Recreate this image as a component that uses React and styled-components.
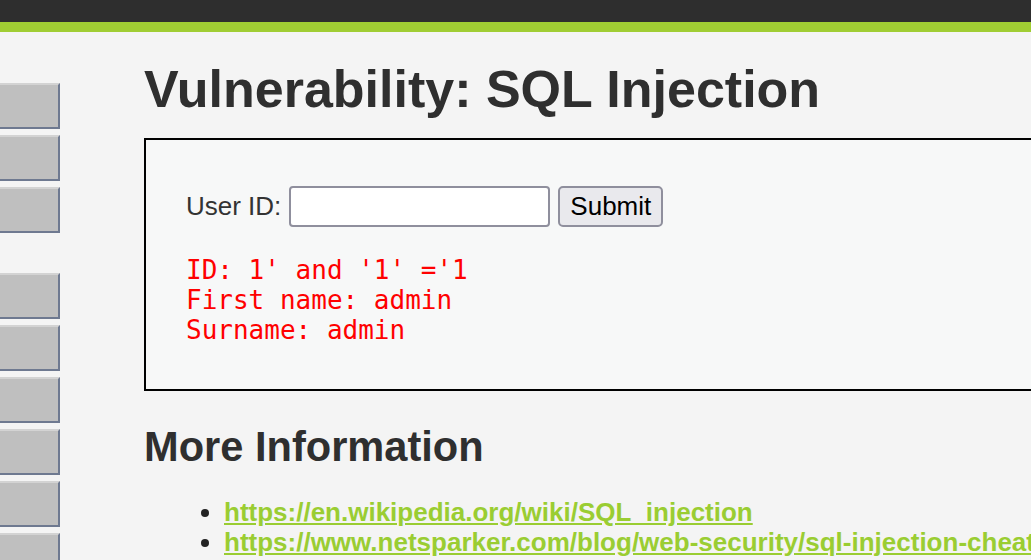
import styled, { createGlobalStyle } from "styled-components"

const Global = createGlobalStyle`
  html, body {
    margin: 0;
    padding: 0;
    background: #f4f4f4;
    overflow: hidden;
  }
  body {
    font-family: 'Liberation Sans', Arial, sans-serif;
    font-size: 26px;
    color: #2f2f2f;
  }
`

const Page = styled.div`
  width: 1031px;
  height: 560px;
  overflow: hidden;
  display: flex;
  flex-direction: column;
`

const Header = styled.div`
  height: 22px;
  background: #2e2e2e;
  border-bottom: 10px solid #a0cd33;
  flex-shrink: 0;
`

const Body = styled.div`
  display: flex;
  align-items: flex-start;
`

const Menu = styled.div`
  width: 60px;
  flex-shrink: 0;
  padding-top: 51px;
`

const MenuGroup = styled.div`
  display: flex;
  flex-direction: column;
  gap: 6px;
  margin-bottom: 40px;
`

const MenuButton = styled.div`
  height: 42px;
  background: #bfbfbf;
  border-top: 2px solid #d3d3d3;
  border-right: 2px solid #6e7990;
  border-bottom: 2px solid #6e7990;
`

const Main = styled.div`
  margin-left: 84px;
  padding-top: 27px;
  width: 1000px;
  flex-shrink: 0;
`

const Title = styled.h1`
  margin: 0 0 19px;
  font-size: 52px;
  line-height: 60px;
  font-weight: 700;
  color: #2f2f2f;
`

const VulnBox = styled.div`
  border: 2px solid #000;
  background: #f7f8f8;
  padding: 46px 40px 44px;
`

const Form = styled.form`
  display: flex;
  align-items: center;
  gap: 8px;
  margin: 0 0 28px;
  color: #333;
`

const Input = styled.input`
  width: 261px;
  height: 41px;
  box-sizing: border-box;
  border: 2px solid #8f8f9d;
  border-radius: 4px;
  background: #fff;
  font-size: 26px;
  padding: 0 6px;
`

const Button = styled.button`
  height: 41px;
  box-sizing: border-box;
  border: 2px solid #8f8f9d;
  border-radius: 5px;
  background: #e9e9ed;
  color: #000;
  font-family: 'Liberation Sans', Arial, sans-serif;
  font-size: 26px;
  padding: 0 10px;
`

const Result = styled.pre`
  margin: 0;
  font-family: 'DejaVu Sans Mono', monospace;
  font-size: 26px;
  line-height: 30px;
  color: #ff0000;
`

const SubTitle = styled.h2`
  margin: 32px 0 26px;
  font-size: 41.6px;
  line-height: 48px;
  font-weight: 700;
  color: #2f2f2f;
`

const Links = styled.ul`
  margin: 0;
  padding-left: 80px;
  line-height: 30px;

  li::marker {
    color: #222;
  }

  a {
    color: #9acd32;
    font-weight: 700;
    white-space: nowrap;
  }
`

const groups = [3, 6]

const App = () => {
    return (
        <Page>
            <Global />
            <Header />
            <Body>
                <Menu>
                    {groups.map((n, g) => (
                        <MenuGroup key={g}>
                            {Array.from({ length: n }).map((_, i) => (
                                <MenuButton key={i} />
                            ))}
                        </MenuGroup>
                    ))}
                </Menu>
                <Main>
                    <Title>Vulnerability: SQL Injection</Title>
                    <VulnBox>
                        <Form onSubmit={e => e.preventDefault()}>
                            <span>User ID:</span>
                            <Input type="text" />
                            <Button type="submit">Submit</Button>
                        </Form>
                        <Result>{`ID: 1' and '1' ='1
First name: admin
Surname: admin`}</Result>
                    </VulnBox>
                    <SubTitle>More Information</SubTitle>
                    <Links>
                        <li><a href="#">https://en.wikipedia.org/wiki/SQL_injection</a></li>
                        <li><a href="#">https://www.netsparker.com/blog/web-security/sql-injection-cheat-sheet/</a></li>
                    </Links>
                </Main>
            </Body>
        </Page>
    )
}

export default App
